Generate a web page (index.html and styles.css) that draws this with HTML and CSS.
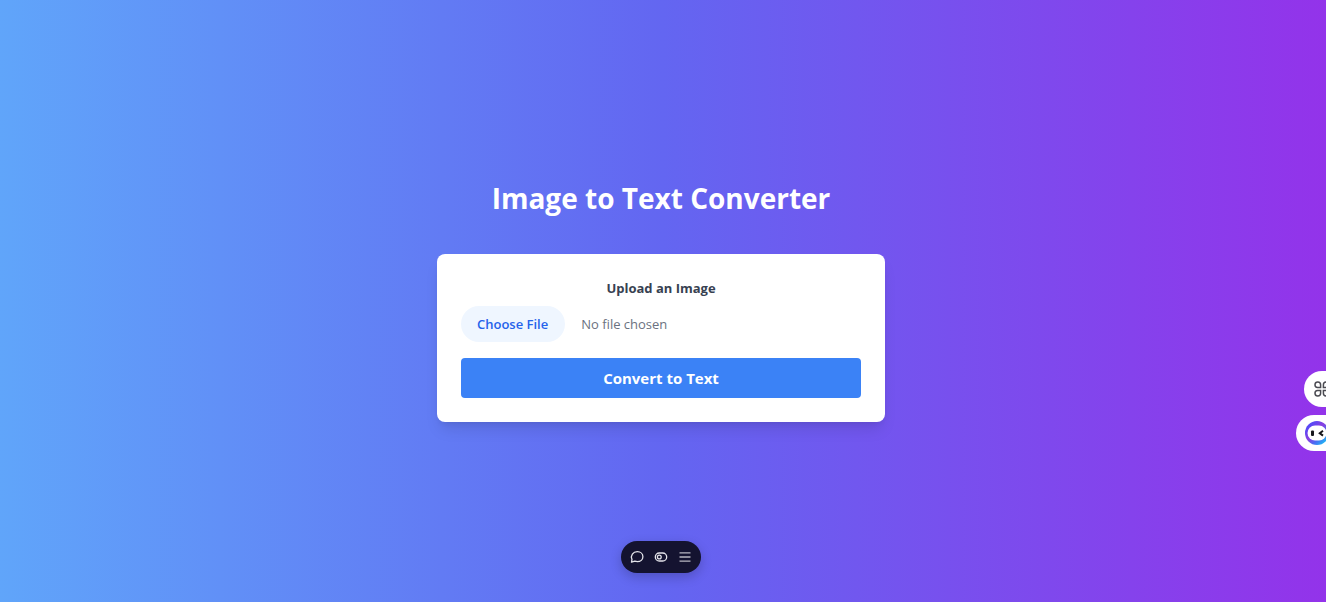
FILE: index.html
```html
<!DOCTYPE html>
<html lang="en">
<head>
<meta charset="utf-8">
<meta name="viewport" content="width=device-width, initial-scale=1">
<title>Image to Text Converter</title>
<link rel="stylesheet" href="styles.css">
</head>
<body>
<main class="page">
  <h1 class="title">Image to Text Converter</h1>
  <form class="card">
    <label class="label" for="image">Upload an Image</label>
    <input class="file" id="image" type="file" accept="image/*">
    <button class="convert" type="button">Convert to Text</button>
  </form>
</main>
<nav class="toolbar" aria-label="Toolbar">
  <button class="tool" type="button" aria-label="Comment">
    <svg width="16" height="16" viewBox="0 0 16 16" fill="none" stroke="#e4e4ea" stroke-width="1.3" stroke-linejoin="round"><path d="M2.500 13.200 3 10.400C1.200 6.400 4 2.700 8.300 2.700c3.300 0 5.600 2.200 5.600 5s-2.400 4.900-5.600 4.900c-1 0-1.800-.2-2.500-.4Z"/></svg>
  </button>
  <button class="tool" type="button" aria-label="Draft mode">
    <svg width="16" height="16" viewBox="0 0 16 16" fill="none" stroke="#e4e4ea" stroke-width="1.300"><rect x="2.300" y="4" width="11.400" height="8" rx="4"/><circle cx="6.300" cy="8" r="1.900"/></svg>
  </button>
  <button class="tool" type="button" aria-label="Menu">
    <svg width="16" height="16" viewBox="0 0 16 16" fill="none" stroke="#b6b6c0" stroke-width="1.300"><path d="M2.500 3.800h11M2.500 8h11M2.500 12.200h11"/></svg>
  </button>
</nav>
<aside class="dock" aria-label="Assistant">
  <button class="dock-button apps" type="button" aria-label="Apps">
    <svg width="18" height="18" viewBox="0 0 18 18" fill="none" stroke="#4b4b52" stroke-width="1.500"><path d="M7.600 7.600H4.500a2.800 2.800 0 1 1 3.100-2.800ZM10.400 7.600h3.100a2.800 2.800 0 1 0-3.100-2.800ZM7.600 10.400H4.500a2.800 2.800 0 1 0 3.100 2.800ZM10.400 10.400h3.100a2.800 2.800 0 1 1-3.100 2.800Z"/></svg>
  </button>
  <button class="dock-button assistant" type="button" aria-label="Chat assistant">
    <svg width="24" height="24" viewBox="0 0 24 24" fill="none">
      <defs><linearGradient id="ring" x1=".1" y1=".3" x2=".8" y2="1"><stop offset="0" stop-color="#5a48f5"/><stop offset=".35" stop-color="#8a3fe0"/><stop offset=".65" stop-color="#4a6cf3"/><stop offset="1" stop-color="#16c5f5"/></linearGradient></defs>
      <circle cx="12" cy="12" r="12" fill="url(#ring)"/>
      <rect x="2.500" y="4.500" width="19" height="15" rx="7.500" fill="#fff"/>
      <rect x="6" y="9.500" width="3" height="5.500" rx="1" fill="#17171c"/>
      <path d="m18 9.800-3.200 2.400 3.200 2.400" stroke="#17171c" stroke-width="2"/>
    </svg>
  </button>
</aside>
</body>
</html>
```
FILE: styles.css
```css
* {
  box-sizing: border-box;
}

body {
  margin: 0;
  font-family: "Segoe UI", "Open Sans", "Noto Sans", sans-serif;
}

button {
  font: inherit;
  border: 0;
  cursor: pointer;
}

svg {
  display: block;
  flex-shrink: 0;
}

.page {
  display: flex;
  flex-direction: column;
  align-items: center;
  justify-content: center;
  min-height: 100vh;
  padding-right: 4px;
  background: linear-gradient(to right, #60a5fa, #6366f1, #9333ea);
}

.title {
  margin: 0 0 38px;
  font-size: 28px;
  font-weight: 700;
  line-height: 36px;
  color: #fff;
}

.card {
  display: flex;
  flex-direction: column;
  width: 100%;
  max-width: 448px;
  padding: 24px;
  border-radius: 8px;
  background: #fff;
  box-shadow: 0 10px 15px -3px rgba(0, 0, 0, 0.1), 0 4px 6px -4px rgba(0, 0, 0, 0.1);
}

.label {
  margin-bottom: 8px;
  font-size: 13px;
  font-weight: 700;
  line-height: 20px;
  text-align: center;
  color: #374151;
}

.file {
  width: 100%;
  margin-bottom: 16px;
  font-family: inherit;
  font-size: 13px;
  line-height: 20px;
  color: #6b7280;
}

.file::file-selector-button {
  margin: 0 16px 0 0;
  padding: 8px 17px 8px 16px;
  border: 0;
  border-radius: 18px;
  font: inherit;
  font-weight: 600;
  color: #2563eb;
  background: #eff6ff;
}

.convert {
  padding: 8px 16px;
  border-radius: 4px;
  font-size: 15px;
  font-weight: 700;
  line-height: 24px;
  color: #fff;
  background: #3b82f6;
}

.toolbar {
  position: fixed;
  bottom: 29px;
  left: calc(50% - 2px);
  display: flex;
  gap: 8px;
  padding: 8px;
  border-radius: 16px;
  background: #141330;
  box-shadow: 0 4px 12px rgba(0, 0, 0, 0.2);
  transform: translateX(-50%);
}

.tool {
  padding: 0;
  background: none;
}

.dock {
  position: fixed;
  top: 371px;
  right: 0;
  display: flex;
  flex-direction: column;
  align-items: flex-end;
  gap: 8px;
}

.dock-button {
  display: flex;
  align-items: center;
  height: 36px;
  padding: 0 0 0 9px;
  overflow: hidden;
  border-radius: 18px 0 0 18px;
  background: #fff;
}

.apps {
  width: 22px;
}

.assistant {
  width: 30px;
}
```
